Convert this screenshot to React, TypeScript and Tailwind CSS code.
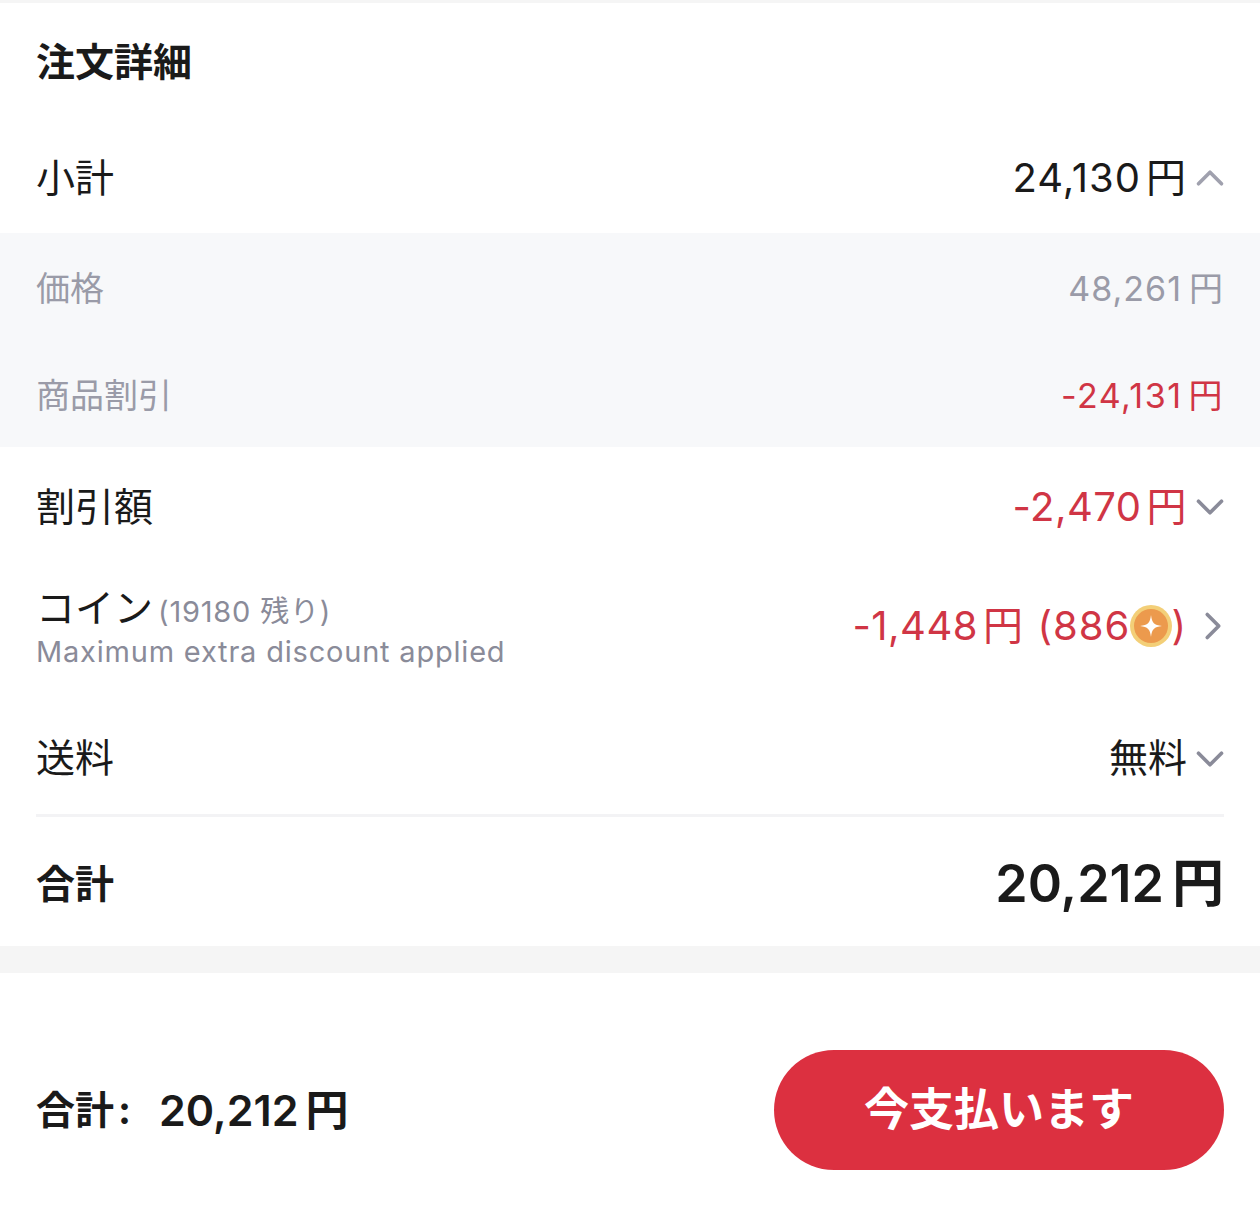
import { ChevronDown, ChevronRight, ChevronUp } from "lucide-react"

function CoinIcon() {
  return (
    <svg width="42" height="42" viewBox="0 0 42 42">
      <circle cx="21" cy="21" r="21" fill="#f3cf78" />
      <circle cx="21" cy="21" r="17" fill="#ec9a4d" />
      <path d="M21 10 C22 18 24 20 32 21 C24 22 22 24 21 32 C20 24 18 22 10 21 C18 20 20 18 21 10 Z" fill="#fff" />
    </svg>
  )
}

function Yen({ value, gap = "ml-[7px]" }: { value: string; gap?: string }) {
  return (
    <span className="flex items-center">
      {value}
      <span className={gap}>円</span>
    </span>
  )
}

export default function App() {
  return (
    <div className="w-[1260px] h-[1230px] bg-white font-['Inter','Noto_Sans_CJK_JP',sans-serif] text-[#1a1a1a] overflow-hidden">
      <div className="h-[3px] bg-[#f5f5f5]" />

      <h2 className="px-9 pt-[34px] h-[119px] text-[39px] leading-[50px] font-bold">注文詳細</h2>

      <div className="px-9 h-[111px] flex items-center justify-between pt-[1px]">
        <span className="text-[39px]">小計</span>
        <div className="flex items-center">
          <span className="text-[40px] tracking-[1px]">
            <Yen value="24,130" gap="ml-[5px]" />
          </span>
          <ChevronUp className="w-[46px] h-[46px] -mr-[9px] text-[#a0a1ae]" strokeWidth={1.9} />
        </div>
      </div>

      <div className="bg-[#f7f8fa] h-[214px] px-9 text-[34px] text-[#9a9ba8]">
        <div className="h-[110px] flex items-center justify-between">
          <span>価格</span>
          <span className="tracking-[1px]">
            <Yen value="48,261" />
          </span>
        </div>
        <div className="h-[104px] flex items-center justify-between">
          <span>商品割引</span>
          <span className="text-[#d03545] tracking-[1.5px]">
            <Yen value="-24,131" gap="ml-[6px]" />
          </span>
        </div>
      </div>

      <div className="px-9 h-[120px] flex items-center justify-between">
        <span className="text-[39px]">割引額</span>
        <div className="flex items-center text-[#d03545]">
          <span className="text-[40px] tracking-[0.5px]">
            <Yen value="-2,470" gap="ml-[5px]" />
          </span>
          <ChevronDown className="w-[46px] h-[46px] -mr-[9px] text-[#8a8b99]" strokeWidth={1.9} />
        </div>
      </div>

      <div className="px-9 h-[118px] flex items-center justify-between">
        <div className="pt-1">
          <div className="flex items-baseline gap-[5px] leading-[44px]">
            <span className="text-[39px]">コイン</span>
            <span className="text-[29px] text-[#8a8b99] tracking-[0.8px]">(19180 残り)</span>
          </div>
          <div className="text-[29px] leading-[36px] text-[#8a8b99] tracking-[0.8px]">Maximum extra discount applied</div>
        </div>
        <div className="flex items-center text-[#d03545]">
          <span className="flex items-center text-[40px] tracking-[1px]">
            <span className="tracking-[0.5px]">
              <Yen value="-1,448" gap="ml-[5px]" />
            </span>
            <span className="ml-[14px]">(886</span>
            <CoinIcon />
            <span className="-ml-[1px]">)</span>
          </span>
          <ChevronRight className="w-[46px] h-[46px] ml-[3px] -mr-[12px] text-[#8a8b99]" strokeWidth={1.9} />
        </div>
      </div>

      <div className="mx-9 h-[132px] flex items-center justify-between border-b-[3px] border-[#f3f3f5] pt-[18px]">
        <span className="text-[39px]">送料</span>
        <div className="flex items-center">
          <span className="text-[39px]">無料</span>
          <ChevronDown className="w-[46px] h-[46px] -mr-[9px] text-[#8a8b99]" strokeWidth={1.9} />
        </div>
      </div>

      <div className="px-9 h-[129px] flex items-center justify-between pt-[5px]">
        <span className="text-[39px] font-bold">合計</span>
        <span className="text-[52px] font-semibold">
          <Yen value="20,212" gap="ml-[8px]" />
        </span>
      </div>

      <div className="h-[27px] bg-[#f5f5f5]" />

      <div className="px-9 h-[257px] flex items-center justify-between pt-[16px]">
        <div className="flex items-center font-bold pt-[2px]">
          <span className="text-[39px]">合計</span>
          <span className="ml-[4px] text-[39px]">:</span>
          <span className="ml-[28px] text-[43px] font-semibold">
            <Yen value="20,212" />
          </span>
        </div>
        <button className="w-[450px] h-[120px] rounded-[60px] bg-[#dc3040] text-white text-[45px] font-semibold">今支払います</button>
      </div>
    </div>
  )
}
